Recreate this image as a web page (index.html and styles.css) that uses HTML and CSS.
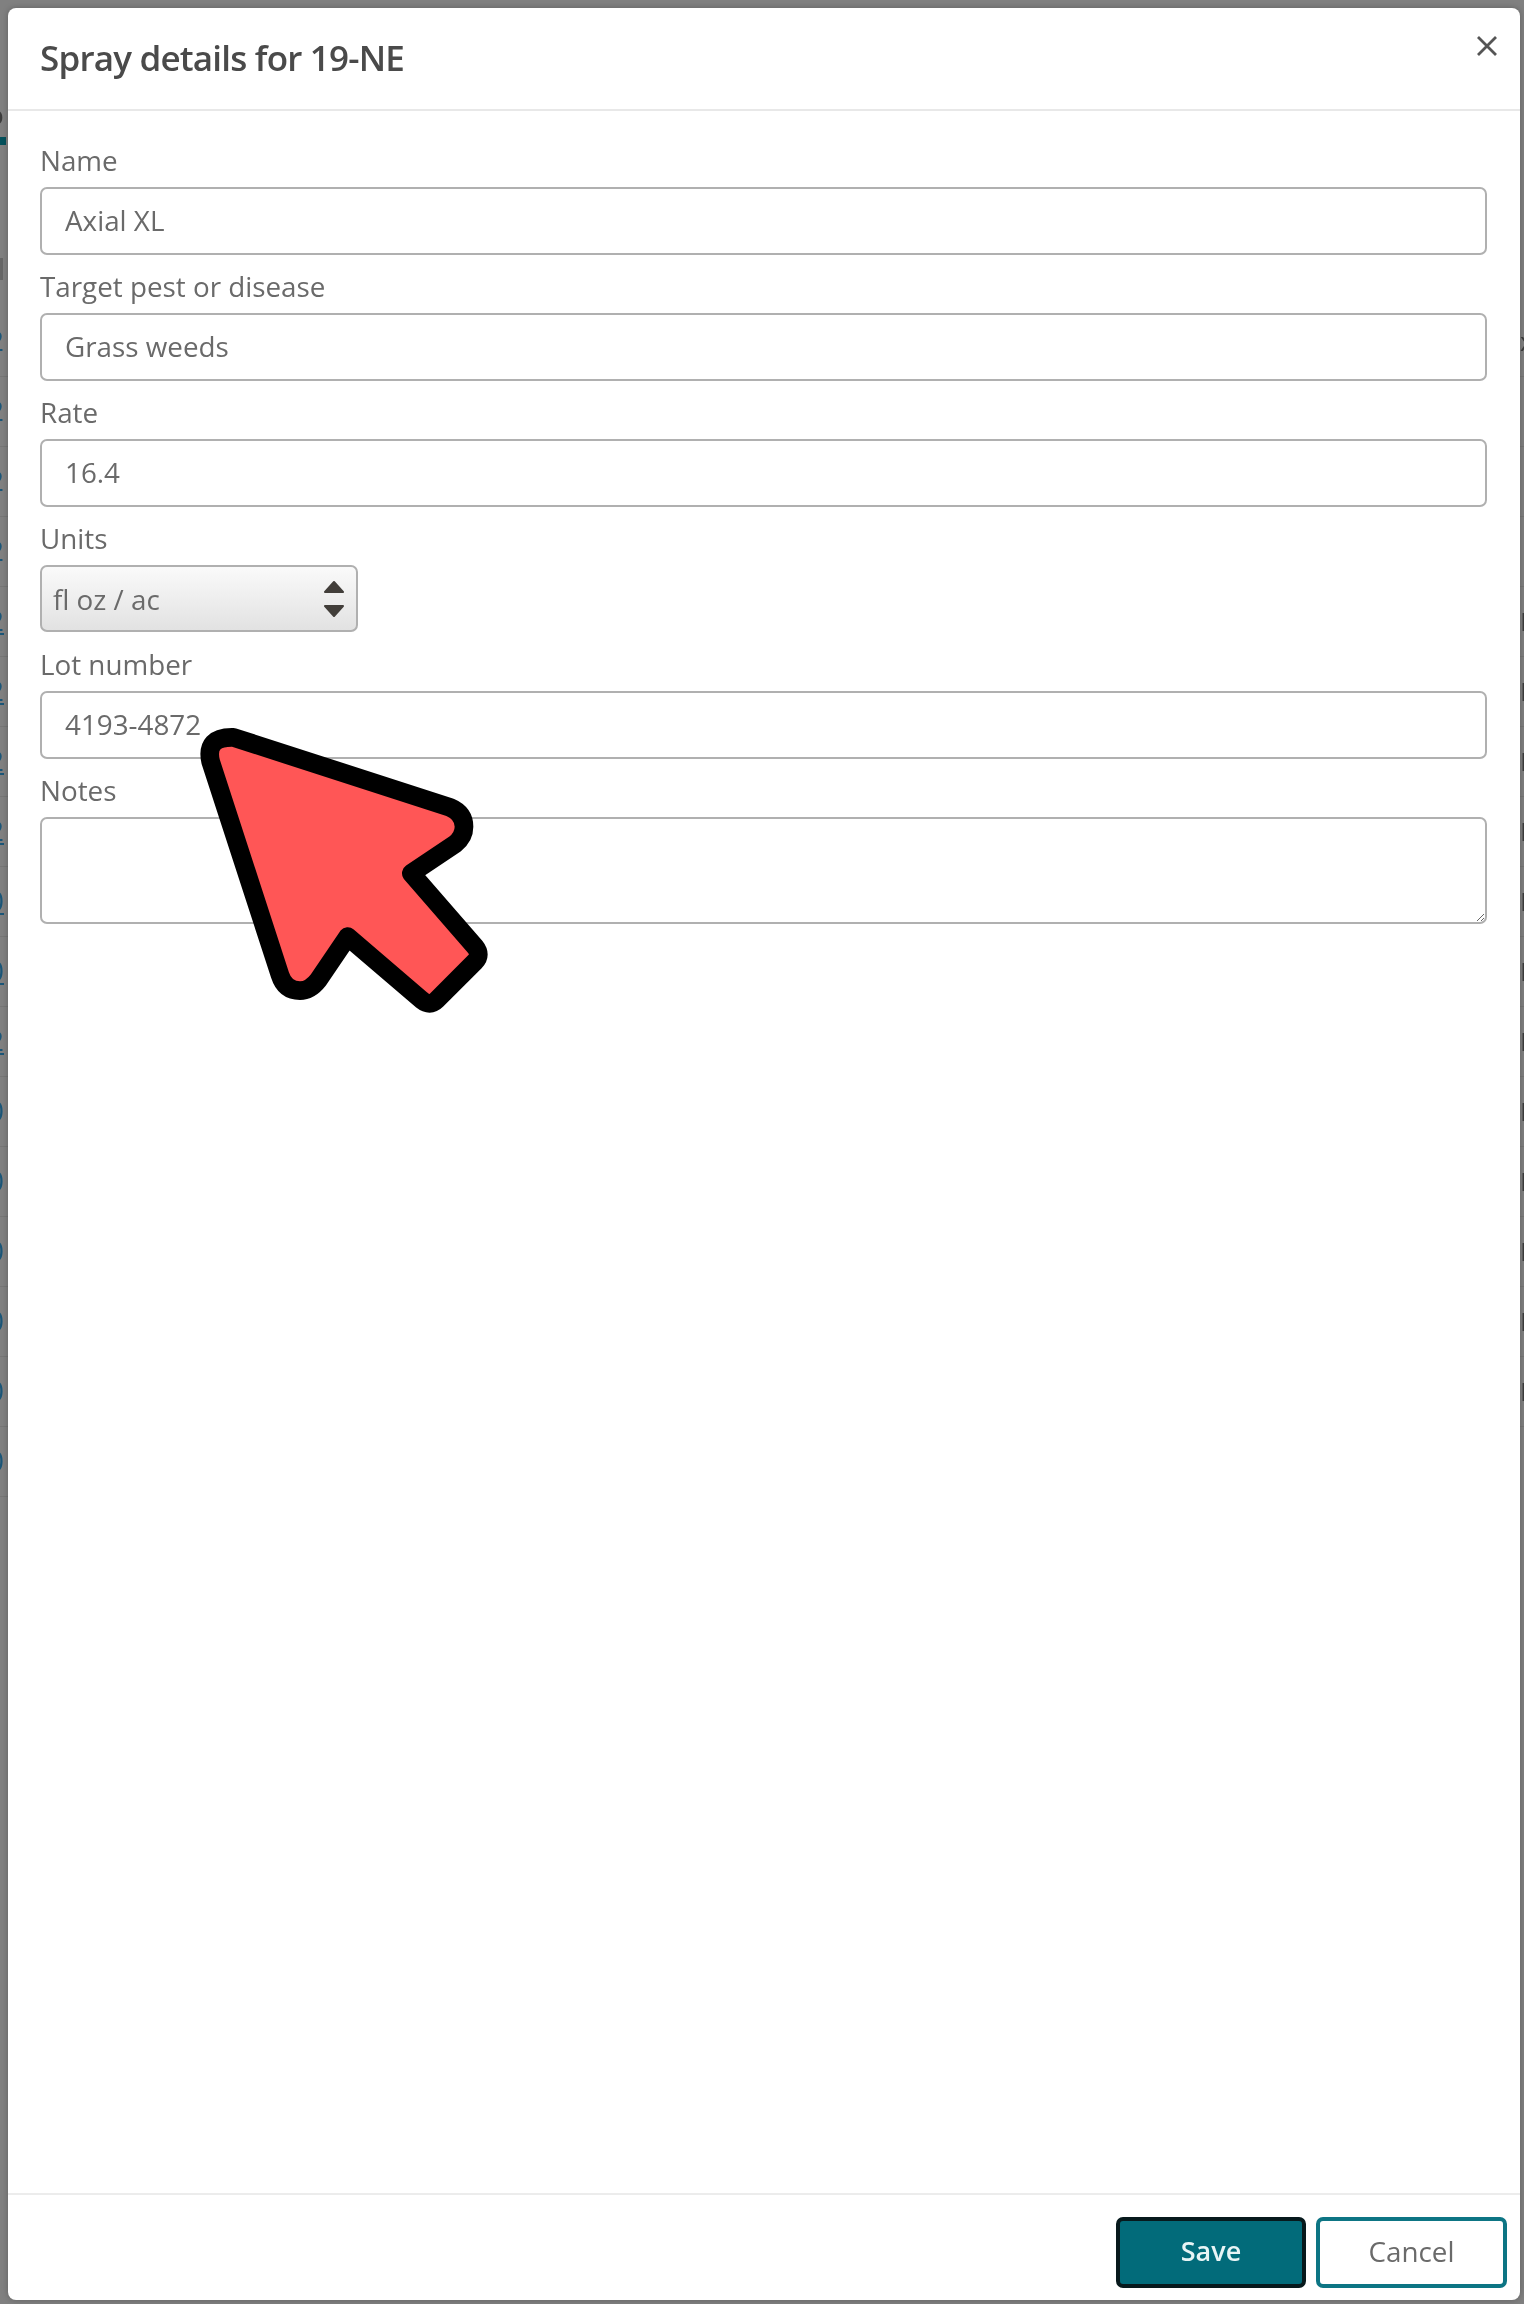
FILE: index.html
```html
<!DOCTYPE html>
<html lang="en">
<head>
<meta charset="utf-8">
<title>Spray details</title>
<link rel="stylesheet" href="styles.css">
</head>
<body>
<div class="backdrop">
  <div class="strip strip-left" aria-hidden="true">
    <span class="frag-o">o</span>
    <span class="frag-bar"></span>
    <span class="frag-block"></span>
    <span class="row">2</span><span class="row">2</span><span class="row">2</span><span class="row">2</span>
    <span class="row row-link">2</span><span class="row row-link">2</span><span class="row row-link">2</span><span class="row row-link">2</span>
    <span class="row row-link">0</span><span class="row row-link">0</span><span class="row row-link">2</span>
    <span class="row">0</span><span class="row">0</span><span class="row">0</span><span class="row">0</span><span class="row">0</span><span class="row">0</span>
  </div>
  <section class="modal">
    <header class="modal-head">
      <h1 class="modal-title">Spray details for 19-NE</h1>
      <button class="close" type="button" aria-label="Close">
        <svg class="close-icon" viewBox="0 0 20 20"><path d="M1 1L19 19M19 1L1 19"/></svg>
      </button>
    </header>
    <form class="modal-body">
      <label class="field"><span class="label">Name</span><input class="input" value="Axial XL"></label>
      <label class="field"><span class="label">Target pest or disease</span><input class="input" value="Grass weeds"></label>
      <label class="field"><span class="label">Rate</span><input class="input" value="16.4"></label>
      <label class="field"><span class="label">Units</span>
        <span class="select"><span>fl oz / ac</span>
          <svg class="select-arrows" viewBox="0 0 20 36"><path d="M10 1L19 11H1Z"/><path d="M1 25H19L10 35Z"/></svg>
        </span>
      </label>
      <label class="field"><span class="label">Lot number</span><input class="input" value="4193-4872"></label>
      <label class="field"><span class="label">Notes</span><textarea class="input notes"></textarea></label>
    </form>
    <footer class="modal-foot">
      <button class="btn btn-save" type="button">Save</button>
      <button class="btn btn-cancel" type="button">Cancel</button>
    </footer>
  </section>
  <div class="strip strip-right" aria-hidden="true">
    <span class="rrow">x</span><span class="rrow"></span><span class="rrow"></span><span class="rrow"></span>
    <span class="rrow">F</span><span class="rrow">E</span><span class="rrow">E</span><span class="rrow">E</span>
    <span class="rrow">E</span><span class="rrow">E</span><span class="rrow">E</span><span class="rrow">F</span>
    <span class="rrow">E</span><span class="rrow">E</span><span class="rrow">E</span><span class="rrow">F</span>
  </div>
</div>
<svg class="cursor" viewBox="0 0 1560 1560"><path d="M632 725Q615 650 700 652L1350 862Q1392 880 1392 920Q1392 950 1365 972L1234 1060L1425 1280Q1445 1305 1425 1325L1310 1440Q1290 1460 1265 1440L1043 1250L955 1380Q930 1412 900 1412Q855 1412 840 1365Z"/></svg>
</body>
</html>
```
FILE: styles.css
```css
* { box-sizing: border-box; }
html, body { margin: 0; }
body { font-family: "Open Sans", sans-serif; color: #555; }
.backdrop { height: 2304px; display: flex; background: #808080; filter: blur(.5px); overflow: hidden; }
.strip { flex: none; height: 2304px; overflow: hidden; display: flex; flex-direction: column; }
.strip-left { width: 8px; }
.strip-right { width: 4px; padding-top: 307px; }
.frag-o { flex: none; height: 32px; margin: 98px 0 0 -13px; font-size: 28px; line-height: 32px; color: #3c3c3c; }
.frag-bar { flex: none; width: 6px; height: 8px; margin-top: 7px; background: #04515c; }
.frag-block { flex: none; width: 3px; height: 22px; margin: 113px 0 27px; background: #666; }
.row { flex: none; display: block; width: 30px; height: 70px; padding-top: 14px; margin-left: -12px; font-size: 28px; line-height: 38px; color: #1b5678; border-bottom: 1px solid #767676; }
.row-link { text-decoration: underline; }
.rrow { flex: none; display: block; width: 30px; height: 70px; padding-top: 16px; font-size: 26px; line-height: 36px; color: #3d3d3d; border-bottom: 1px solid #767676; }
.modal { flex: 1; height: 2292px; margin-top: 8px; display: flex; flex-direction: column; position: relative; background: #fff; border-radius: 8px; box-shadow: 0 0 6px rgba(0,0,0,.25); }
.modal-head { height: 103px; flex: none; padding: 29px 32px 0; position: relative; border-bottom: 2px solid #e8e8e8; }
.modal-title { margin: 0; font-size: 35px; line-height: 42px; font-weight: 600; letter-spacing: -.8px; color: #4a4a4a; }
.close { position: absolute; top: 28px; right: 23px; width: 20px; height: 20px; padding: 0; border: 0; background: none; }
.close-icon { display: block; width: 20px; height: 20px; fill: none; stroke: #555; stroke-width: 2.8; }
.modal-body { flex: 1; padding: 28px 33px 0 32px; display: flex; flex-direction: column; }
.field { display: block; height: 126px; flex: none; }
.label { display: block; height: 48px; padding-top: 4px; color: #6a6a6a; font-size: 27.8px; line-height: 34px; }
.input { display: block; width: 100%; height: 68px; border: 2px solid #b0b0b0; border-radius: 7px; padding: 0 23px 3px; font: 27.8px/38px "Open Sans", sans-serif; color: #6a6a6a; background: #fff; outline: none; }
.notes { height: 107px; padding-top: 14px; }
.select { display: flex; align-items: center; justify-content: space-between; width: 318px; height: 67px; border: 2px solid #b0b0b0; border-radius: 7px; padding: 0 12px 0 11px; font-size: 27.8px; color: #6a6a6a; background: linear-gradient(#fafafa, #e2e2e2); }
.select-arrows { width: 20px; height: 36px; fill: #423e3a; stroke: #423e3a; stroke-width: 2; stroke-linejoin: round; }
.modal-foot { height: 107px; flex: none; border-top: 2px solid #ececec; display: flex; justify-content: flex-end; align-items: flex-start; gap: 10px; padding: 22px 13px 0 0; }
.btn { width: 190px; height: 71px; padding: 0 0 4px; border-radius: 7px; font: 600 27px "Open Sans", sans-serif; }
.btn-save { background: #026b7a; color: #e8f4f5; border: 4px solid #07191c; }
.btn-cancel { width: 191px; background: #fff; color: #6a6a6a; border: 4px solid #0d7584; font: 400 27.8px "Open Sans", sans-serif; }
.cursor { position: absolute; left: 0; top: 520px; width: 520px; height: 520px; fill: #ff5656; stroke: #000; stroke-width: 56; stroke-linejoin: round; }
```
